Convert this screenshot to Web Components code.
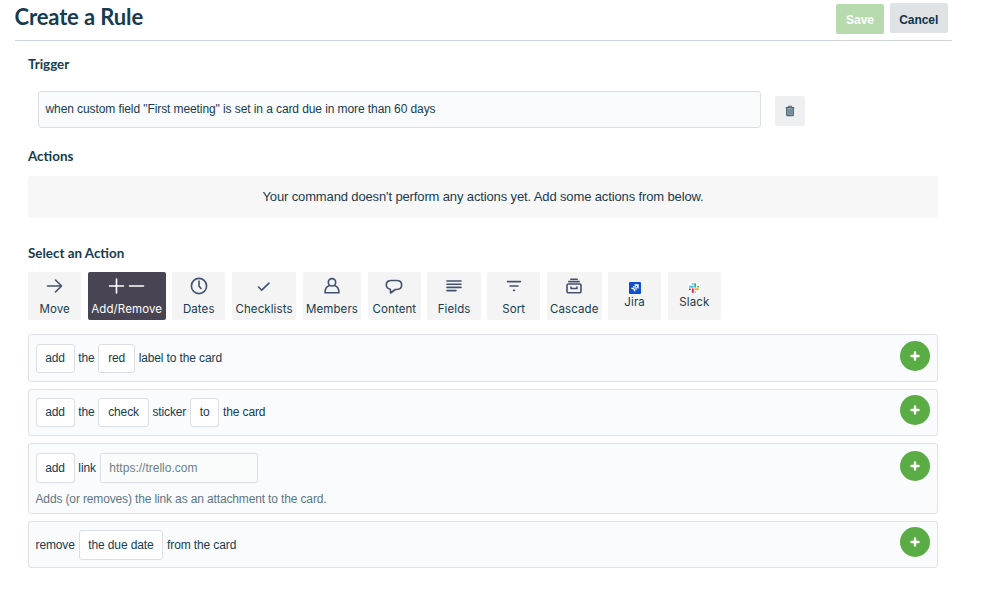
<!DOCTYPE html>
<html lang="en">
<head>
<meta charset="utf-8">
<title>Create a Rule</title>
<style>
  body {
    margin: 0;
    background: #fff;
    color: #173b4f;
    font: 12px/14px "Liberation Sans", Arial, sans-serif;
    letter-spacing: -0.09px;
  }
</style>
</head>
<body>
<rule-page>
  <rule-header slot="header" title-text="Create a Rule">
    <rule-button kind="save">Save</rule-button>
    <rule-button kind="cancel">Cancel</rule-button>
  </rule-header>

  <rule-section name="Trigger" style="--gap: 19px">
    <rule-trigger>when custom field "First meeting" is set in a card due in more than 60 days</rule-trigger>
  </rule-section>

  <rule-section name="Actions" style="--top: 20px; --gap: 12px">
    <rule-notice>Your command doesn't perform any actions yet. Add some actions from below.</rule-notice>
  </rule-section>

  <rule-section name="Select an Action" style="--top: 27px; --gap: 11.5px">
    <action-tabs>
      <action-tab icon="move">Move</action-tab>
      <action-tab icon="add" selected style="--width: 78px">Add/Remove</action-tab>
      <action-tab icon="dates">Dates</action-tab>
      <action-tab icon="checklists" style="--width: 64.5px">Checklists</action-tab>
      <action-tab icon="members" style="--width: 58.7px">Members</action-tab>
      <action-tab icon="content">Content</action-tab>
      <action-tab icon="fields">Fields</action-tab>
      <action-tab icon="sort">Sort</action-tab>
      <action-tab icon="cascade" style="--width: 54.8px">Cascade</action-tab>
      <action-tab icon="jira" compact>Jira</action-tab>
      <action-tab icon="slack" compact>Slack</action-tab>
    </action-tabs>
    <action-row style="--height: 48px; --pad: 9px; --plus: 6px">
      <rule-chip>add</rule-chip><span>the</span><rule-chip>red</rule-chip><span>label to the card</span>
    </action-row>
    <action-row style="--height: 47px; --pad: 8px; --plus: 5px">
      <rule-chip>add</rule-chip><span>the</span><rule-chip>check</rule-chip><span>sticker</span><rule-chip>to</rule-chip><span>the card</span>
    </action-row>
    <action-row style="--height: 71px; --pad: 9.5px; --plus: 7px">
      <rule-chip>add</rule-chip><span>link</span><rule-chip field>https://trello.com</rule-chip>
      <span slot="note">Adds (or removes) the link as an attachment to the card.</span>
    </action-row>
    <action-row style="--height: 47.5px; --pad: 8.5px; --plus: 5.5px">
      <span>remove</span><rule-chip>the due date</rule-chip><span>from the card</span>
    </action-row>
  </rule-section>
</rule-page>

<script>
const line = (body, w = 24, h = 24) => /* html */`
  <svg width="${w}" height="${h}" viewBox="0 0 ${w} ${h}" fill="none" stroke="currentColor"
    stroke-width="1.6" stroke-linecap="round" stroke-linejoin="round">${body}</svg>`;

const ICONS = {
  move: line(`<path d="M4.500 12h14M12.500 6l6 6-6 6"/>`),
  add: line(`<path d="M3.5 12h14M10.500 5v14M23.500 12h14"/>`, 41, 24),
  dates: line(`<circle cx="12" cy="12" r="7.600"/><path d="M12 7v5l2 2.500"/>`),
  checklists: line(`<path d="M6.500 13l3.200 3.200L17 9.200"/>`),
  members: line(`<circle cx="12" cy="8.300" r="3.700"/><path d="M9.300 11.600C6.500 12.600 5 15 5 18.800h14C19 15 17.500 12.600 14.700 11.600"/>`),
  content: line(`<path d="M8.300 15.200L8.600 19l4.600-3.500h1.300c3.300 0 5.200-1.800 5.200-4.400s-1.900-4.600-5.200-4.600H9.300C6.100 6.500 4.300 8.500 4.300 11.100c0 2.100 1.400 3.700 4 4.100z"/>`),
  fields: line(`<path d="M5 7h14M5 10.200h14M5 13.400h14M5 16.600h9"/>`),
  sort: line(`<path d="M5.500 7.600h13M8 12h8M11.600 16.400h.8"/>`),
  cascade: line(`<rect x="5" y="10" width="14" height="8.800" rx="1.200"/><path d="M6.800 7.600h10.400M8.800 5.200h6.400M9 13v1.500h6V13"/>`),
  jira: /* html */`<svg width="12" height="12" viewBox="0 0 12 12">
    <rect width="12" height="12" rx="1" fill="#0b4fd0"/>
    <path d="M5.300 2.300h4.400v4.400c-1.100-.1-1.700-.8-1.700-1.800v-.8h-.9c-1 0-1.700-.7-1.800-1.800z" fill="#fff"/>
    <path d="M3.700 4h3.200v1h1v3.300c-1-.1-1.600-.8-1.600-1.800v-.8h-.9c-1 0-1.600-.7-1.700-1.700z" fill="#b9d0f8"/>
    <path d="M2.200 5.700h3v1h1V9.700c-1-.1-1.500-.7-1.500-1.600v-.8h-.9c-.9 0-1.500-.7-1.600-1.600z" fill="#fff"/></svg>`,
  slack: /* html */`<svg width="12" height="12" viewBox="0 0 12 12">
    <rect width="12" height="12" rx="1.500" fill="#fff"/>
    <g fill="none" stroke-width="1.900" stroke-linecap="round">
      <path d="M4.800 1.900h.01M2 4.800h2.800" stroke="#36c5f0"/>
      <path d="M10.100 4.800h.01M7.200 2v2.800" stroke="#2eb67d"/>
      <path d="M7.200 10.100h.01M10 7.200H7.200" stroke="#ecb22e"/>
      <path d="M1.900 7.200h.01M4.800 10V7.200" stroke="#e01e5a"/>
    </g></svg>`,
  trash: /* html */`<svg width="10" height="12" viewBox="0 0 10 12" fill="none" stroke="#4a6778">
    <path d="M.8 2.700h8.400" stroke-width="1.400"/><path d="M3.300 2.400V1.200h3.400v1.200" stroke-width="1"/>
    <path d="M1.700 3v6.800q0 .9.900.9h4.800q.9 0 .9-.9V3" stroke-width="1.300" fill="#9aacb6"/>
    <path d="M4 4v5.500M6 4v5.500" stroke-width=".9"/></svg>`,
  plus: /* html */`<svg width="10" height="10" viewBox="0 0 10 10" stroke="#fff" stroke-width="2.400" stroke-linecap="round">
    <path d="M5 1.500v7M1.500 5h7"/></svg>`,
};

class RuleElement extends HTMLElement {
  constructor() {
    super();
    this.attachShadow({ mode: "open" });
  }

  connectedCallback() {
    this.shadowRoot.innerHTML = /* html */`<style>${this.constructor.styles}</style>${this.template()}`;
  }

  template() {
    return `<slot></slot>`;
  }
}

class RulePage extends RuleElement {
  static get styles() {
    return /* css */`
      :host { display: block; width: 998px; height: 616px; overflow: hidden; }
      main { padding: 15px 60px 0 28px; }
    `;
  }

  template() {
    return /* html */`<slot name="header"></slot><main><slot></slot></main>`;
  }
}

class RuleHeader extends RuleElement {
  static get styles() {
    return /* css */`
      :host {
        display: flex;
        justify-content: space-between;
        box-sizing: border-box;
        width: 937px;
        height: 41px;
        margin-left: 14.5px;
        padding: 3px 3.500px 0 0;
        border-bottom: 1px solid #d0d3d6;
      }
      h1 { margin: 0; font: bold 22px/27px Lato, sans-serif; letter-spacing: -0.13px; }
      .buttons { display: flex; gap: 5.5px; align-items: flex-start; }
    `;
  }

  template() {
    return /* html */`<h1>${this.getAttribute("title-text")}</h1><div class="buttons"><slot></slot></div>`;
  }
}

class RuleButton extends RuleElement {
  static get styles() {
    return /* css */`
      :host {
        display: grid;
        place-items: center;
        box-sizing: border-box;
        height: 30px;
        border-radius: 2px;
        font-weight: bold;
        letter-spacing: -0.05px;
      }
      :host([kind="save"]) { width: 48px; margin-top: 1px; padding-top: 1px; background: #b7dbaf; color: #fff; }
      :host([kind="cancel"]) { width: 58.500px; padding-top: 3px; background: #dfe3e6; color: #0c344c; }
    `;
  }
}

class RuleSection extends RuleElement {
  static get styles() {
    return /* css */`
      :host { display: block; padding-top: var(--top, 0); }
      h2 { margin: 0 0 var(--gap); font: bold 13.4px/16px Lato, sans-serif; letter-spacing: 0; }
    `;
  }

  template() {
    return /* html */`<h2>${this.getAttribute("name")}</h2><slot></slot>`;
  }
}

class RuleTrigger extends RuleElement {
  static get styles() {
    return /* css */`
      :host { display: flex; gap: 14px; margin-left: 9.500px; }
      .text {
        display: flex;
        align-items: center;
        box-sizing: border-box;
        width: 723.5px;
        height: 36.5px;
        padding-left: 7px;
        border: 1px solid #dce0e6;
        border-radius: 3px;
        background: #fafbfd;
      }
      .delete {
        display: grid;
        place-items: center;
        width: 30px;
        height: 30px;
        margin-top: 5px;
        border-radius: 2px;
        background: #edeff0;
      }
    `;
  }

  template() {
    return /* html */`<div class="text"><slot></slot></div><div class="delete">${ICONS.trash}</div>`;
  }
}

class RuleNotice extends RuleElement {
  static get styles() {
    return /* css */`
      :host {
        display: grid;
        place-items: center;
        box-sizing: border-box;
        height: 42px;
        padding-top: 1.500px;
        border-radius: 3px;
        background: #f7f7f7;
        font-size: 13px;
        letter-spacing: -0.13px;
      }
    `;
  }
}

class ActionTabs extends RuleElement {
  static get styles() {
    return /* css */`
      :host { display: flex; gap: 6.4px; margin-bottom: 14px; }
    `;
  }
}

class ActionTab extends RuleElement {
  static get styles() {
    return /* css */`
      :host {
        display: flex;
        flex-direction: column;
        align-items: center;
        box-sizing: border-box;
        width: var(--width, 53.3px);
        height: 47.500px;
        padding-top: 1.5px;
        border-radius: 2px;
        background: #f4f4f4;
        font: 11.5px/16px Inter, sans-serif;
        letter-spacing: 0.1px;
        white-space: nowrap;
      }
      :host([selected]) { background: #494453; color: #fff; }
      :host([compact]) { padding-top: 9.500px; }
      .icon { display: flex; height: 27px; color: #42526e; }
      :host([compact]) .icon { height: 12px; }
      :host([selected]) .icon { color: #fff; }
    `;
  }

  template() {
    return /* html */`<div class="icon">${ICONS[this.getAttribute("icon")]}</div><slot></slot>`;
  }
}

class ActionRow extends RuleElement {
  static get styles() {
    return /* css */`
      :host {
        display: flex;
        justify-content: space-between;
        align-items: flex-start;
        box-sizing: border-box;
        height: var(--height);
        margin-bottom: 7px;
        padding: 0 7px 0 6.5px;
        border: 1px solid #dfe1e8;
        border-radius: 3px;
        background: #fafbfd;
      }
      .body { padding-top: var(--pad); }
      .line { display: flex; align-items: center; gap: 3.8px; letter-spacing: -0.12px; }
      .note { margin-top: 9px; color: #5e7683; letter-spacing: -0.14px; }
      .add {
        display: grid;
        place-items: center;
        width: 30px;
        height: 30px;
        margin-top: var(--plus);
        border-radius: 50%;
        background: #5aac44;
      }
    `;
  }

  template() {
    return /* html */`
      <div class="body">
        <div class="line"><slot></slot></div>
        <div class="note"><slot name="note"></slot></div>
      </div>
      <div class="add">${ICONS.plus}</div>`;
  }
}

class RuleChip extends RuleElement {
  static get styles() {
    return /* css */`
      :host {
        display: flex;
        align-items: center;
        box-sizing: border-box;
        height: 29.500px;
        padding: 0 8.7px;
        border: 1px solid #dbdfe4;
        border-radius: 3px;
        background: #fff;
      }
      :host([field]) {
        width: 158px;
        border-radius: 2px;
        background: #fafcfc;
        color: #6b808c;
        letter-spacing: 0;
      }
    `;
  }
}

customElements.define("rule-page", RulePage);
customElements.define("rule-header", RuleHeader);
customElements.define("rule-button", RuleButton);
customElements.define("rule-section", RuleSection);
customElements.define("rule-trigger", RuleTrigger);
customElements.define("rule-notice", RuleNotice);
customElements.define("action-tabs", ActionTabs);
customElements.define("action-tab", ActionTab);
customElements.define("action-row", ActionRow);
customElements.define("rule-chip", RuleChip);
</script>
</body>
</html>
